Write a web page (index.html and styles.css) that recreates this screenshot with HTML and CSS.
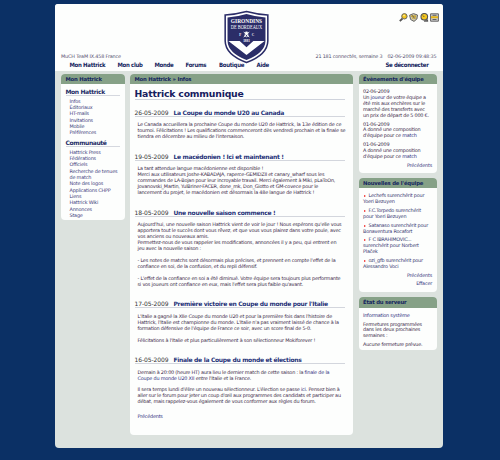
FILE: index.html
```
<!DOCTYPE html>
<html lang="fr">
<head>
<meta charset="utf-8">
<title>Hattrick</title>
<link rel="stylesheet" href="styles.css">
</head>
<body>
<div class="page">
  <header class="header">
    <div class="tools">
      <svg width="9" height="9" viewBox="0 0 9 9"><path d="M3.5 5.5L.8 8.2" stroke="#555" stroke-width="1.8"/><circle cx="5.4" cy="3.3" r="2.7" fill="#f3c51d" stroke="#666" stroke-width="1"/><circle cx="5" cy="2.6" r=".8" fill="#fff6b0"/></svg>
      <svg width="9" height="9" viewBox="0 0 9 9"><path d="M.6 2.2L4.5.6 8.5 2 7.9 6 5 8.4 1.6 6.5z" fill="#cfc9b0" stroke="#666" stroke-width="1"/><path d="M2 3.2h5M3 5h4" stroke="#c79d13" stroke-width="1.2"/><path d="M3.4 2.3l2 3" stroke="#555" stroke-width=".8"/></svg>
      <svg width="9" height="9" viewBox="0 0 9 9"><circle cx="4.3" cy="3.8" r="3.3" fill="#f3c51d" stroke="#555" stroke-width="1.1"/><path d="M4.3 4L2.8 2.4M4 8.2h4L6.6 5.8" fill="#777" stroke="#444" stroke-width=".8"/></svg>
      <svg width="9" height="9" viewBox="0 0 9 9"><path d="M.6.8h7.8v7.4H.6z" fill="#ccc" stroke="#666" stroke-width="1"/><path d="M1 4.3h7" stroke="#e4b51a" stroke-width="2"/><path d="M2.5 2.3h4M2.5 6.5h4" stroke="#555" stroke-width=".9"/></svg>
    </div>
    <div class="status">
      <span class="team">MuCH TeaM IX.458 France</span>
      <span class="online">21 181 connectés, semaine 3</span>
      <span class="clock">02-06-2009 09:48:35</span>
    </div>
    <nav class="nav">
      <a class="n1">Mon Hattrick</a><a class="n2">Mon club</a><a class="n3">Monde</a><a class="n4">Forums</a><a class="n5">Boutique</a><a class="n6">Aide</a><a class="logout">Se déconnecter</a>
    </nav>
    <svg class="crest" width="45" height="54" viewBox="0 0 46 54">
      <path d="M1.2 4.5Q12 4 23 1Q34 4 44.8 4.5V31Q44.5 45 23 53Q1.5 45 1.2 31Z" fill="#fff" stroke="#2b2d68" stroke-width="1.6"/>
      <path d="M3.6 7Q14 6.4 23 3.6Q32 6.4 42.4 7V31Q42 43 23 50.5Q4 43 3.6 31Z" fill="#2b2d68"/>
      <path d="M4.5 31H16L23 37.5L30 31H41.5L23 45.5Z" fill="#fff"/>
      <text x="23" y="13" text-anchor="middle" textLength="32" lengthAdjust="spacingAndGlyphs" class="crest-bold">GIRONDINS</text>
      <text x="23" y="19" text-anchor="middle" textLength="32" lengthAdjust="spacingAndGlyphs" class="crest-name">DE BORDEAUX</text>
      <text x="16.5" y="26.3" text-anchor="middle" class="crest-small">F</text>
      <text x="29.5" y="26.3" text-anchor="middle" class="crest-small">C</text>
      <path d="M20.2 22L25.8 27M25.8 22L20.2 27" stroke="#fff" stroke-width="1"/><circle cx="23" cy="22.8" r="1.5" fill="#fff"/><circle cx="23" cy="25.2" r="1.6" fill="none" stroke="#fff" stroke-width=".8"/>
      <text x="23" y="32.2" text-anchor="middle" class="crest-small">1881</text>
    </svg>
  </header>
  <div class="columns">
    <aside class="left panel">
      <h2 class="bar">Mon Hattrick</h2>
      <div class="menu">
        <h3>Mon Hattrick</h3>
        <ul><li>Infos</li><li>Éditoriaux</li><li>HT-mails</li><li>Invitations</li><li>Mobile</li><li>Préférences</li></ul>
        <h3>Communauté</h3>
        <ul><li>Hattrick Press</li><li>Fédérations</li><li>Officiels</li><li>Recherche de tenues<br>de match</li><li>Note des logos</li><li>Applications CHPP</li><li>Liens</li><li>Hattrick Wiki</li><li>Annonces</li><li>Stage</li></ul>
      </div>
    </aside>
    <main class="main panel">
      <h2 class="bar">Mon Hattrick » Infos</h2>
      <div class="content">
        <h1>Hattrick communique</h1>
        <article>
          <h3><time>26-05-2009</time>La Coupe du monde U20 au Canada</h3>
          <p>Le Canada accueillera la prochaine Coupe du monde U20 de Hattrick, la 13e édition de ce<br>tournoi. Félicitations ! Les qualifications commenceront dès vendredi prochain et la finale se<br>tiendra en décembre au milieu de l'intersaison.</p>
        </article>
        <article>
          <h3><time>19-05-2009</time>Le macédonien ! Ici et maintenant !</h3>
          <p>La tant attendue langue macédonienne est disponible !<br>Merci aux utilisateurs Joshe-KABADAJA, raperce-GEMIDZII et canary_wharf sous les<br>commandes de LA-Bojan pour leur incroyable travail. Merci également à Miki, pLaToOn,<br>Jovanovski_Martin, YulBriner-FACER, done_mk, Don_Giotto et GM-covece pour le<br>lancement du projet, le macédonien est désormais la 48e langue de Hattrick !</p>
        </article>
        <article>
          <h3><time>18-05-2009</time>Une nouvelle saison commence !</h3>
          <p>Aujourd'hui, une nouvelle saison Hattrick vient de voir le jour ! Nous espérons qu'elle vous<br>apportera tout le succès dont vous rêvez, et que vous vous plairez dans votre poule, avec<br>vos anciens ou nouveaux amis.<br>Permettez-nous de vous rappeler les modifications, annoncées il y a peu, qui entrent en<br>jeu avec la nouvelle saison :<br><br>- Les notes de matchs sont désormais plus précises, et prennent en compte l'effet de la<br>confiance en soi, de la confusion, et du repli défensif.<br><br>- L'effet de la confiance en soi a été diminué. Votre équipe sera toujours plus performante<br>si vos joueurs ont confiance en eux, mais l'effet sera plus faible qu'avant.</p>
        </article>
        <article>
          <h3><time>17-05-2009</time>Première victoire en Coupe du monde pour l'Italie</h3>
          <p>L'Italie a gagné la XIIe Coupe du monde U20 et pour la première fois dans l'histoire de<br>Hattrick, l'Italie est championne du monde. L'Italie n'a pas vraiment laissé de chance à la<br>formation défensive de l'équipe de France ce soir, avec un score final de 5-0.<br><br>Félicitations à l'Italie et plus particulièrement à son sélectionneur Mokiforever !</p>
        </article>
        <article>
          <h3><time>16-05-2009</time>Finale de la Coupe du monde et élections</h3>
          <p>Demain à 20:00 (heure HT) aura lieu le dernier match de cette saison : la <a>finale de la<br>Coupe du monde U20 XII</a> entre l'Italie et la France.<br><br>Il sera temps lundi d'élire un nouveau sélectionneur. L'élection se passe <a>ici</a>. Pensez bien à<br>aller sur le forum pour jeter un coup d'œil aux programmes des candidats et participer au<br>débat, mais rappelez-vous également de vous conformer aux règles du forum.</p>
        </article>
        <a class="prev">Précédents</a>
      </div>
    </main>
    <aside class="right">
      <section class="panel events">
        <h2 class="bar">Évènements d'équipe</h2>
        <div class="box">
          <p>02-06-2009<br>Un <a>joueur</a> de votre équipe a<br>été mis aux enchères sur le<br>marché des transferts avec<br>un prix de départ de 5 000 €.</p>
          <p>01-06-2009<br>A donné une composition<br>d'équipe pour ce <a>match</a></p>
          <p>01-06-2009<br>A donné une composition<br>d'équipe pour ce <a>match</a></p>
          <p class="more">Précédents</p>
        </div>
      </section>
      <section class="panel news">
        <h2 class="bar">Nouvelles de l'équipe</h2>
        <div class="box">
          <p class="item">Lechefs surenchérit pour<br>Yoeri Bezuyen</p>
          <p class="item">F.C.Torpedo surenchérit<br>pour Yoeri Bezuyen</p>
          <p class="item">Satanaso surenchérit pour<br>Bonaventura Rocafort</p>
          <p class="item">F C IBRAHIMOVIC...<br>surenchérit pour Norbert<br>Plaček</p>
          <p class="item">ozi_gfb surenchérit pour<br>Alessandro Voci</p>
          <p class="more">Précédents</p>
          <p class="more">Effacer</p>
        </div>
      </section>
      <section class="panel server">
        <h2 class="bar">État du serveur</h2>
        <div class="box">
          <p><a>Information système</a></p>
          <p>Fermetures programmées<br>dans les deux prochaines<br>semaines :</p>
          <p>Aucune fermeture prévue.</p>
        </div>
      </section>
    </aside>
  </div>
</div>
</body>
</html>
```
FILE: styles.css
```
* { box-sizing: border-box; margin: 0; padding: 0; }
body {
  width: 500px; height: 460px; overflow: hidden; padding: 4px 0 0 55px;
  background: #0b3065;
  font: 4.9px/5.93px "DejaVu Sans", sans-serif; color: #3c2a48; white-space: nowrap;
  letter-spacing: -.195px;
}
a { color: #303080; }
.page { width: 387.5px; height: 444px; background: #dce2de; border-radius: 3px 3px 4px 4px; overflow: hidden; }
.header { position: relative; height: 67px; background: #fdfefd; }
.tools { position: absolute; left: 344px; top: 9px; display: flex; gap: 1.3px; }
.status { display: flex; padding: 49px 6px 0 6px; height: 56px; line-height: 6px; letter-spacing: -.15px; color: #555070; }
.online { margin-left: auto; letter-spacing: -.2px; }
.clock { margin-left: 5px; }
.nav { display: flex; padding-left: 14.5px; padding-right: 14px; font: bold 6px/10px "DejaVu Sans Condensed", "DejaVu Sans", sans-serif; letter-spacing: -.3px; }
.nav a { color: #14245e; }
.n1 { width: 48px; } .n2 { width: 37px; } .n3 { width: 31px; } .n4 { width: 33.5px; } .n5 { width: 37.5px; }
.logout { margin-left: auto; }
.crest { position: absolute; left: 169px; top: 5.5px; letter-spacing: 0; }
.crest text { fill: #fff; font-family: "Liberation Serif", serif; }
.crest .crest-bold { font-size: 6px; font-weight: bold; }
.crest .crest-name { font-size: 5.2px; }
.crest .crest-small { font-size: 3.4px; font-weight: bold; }
.columns { display: flex; align-items: flex-start; gap: 5.5px; padding: 2.5px 6px 0; }
.panel { background: #fdfefd; border-radius: 4px; overflow: hidden; }
.bar { height: 10.5px; padding-left: 4.5px; background: #86a187; color: #14245e; font-size: 5.3px; line-height: 10.5px; letter-spacing: -.19px; }
.left { width: 63.5px; height: 146.5px; }
.menu { padding: 4.5px 4.5px 0; }
.menu h3 { height: 7px; margin-bottom: 2.2px; border-bottom: 1px solid #d5d8df; color: #1c2c66; font-size: 6px; line-height: 6px; letter-spacing: -.38px; }
.menu ul { list-style: none; padding-left: 4px; margin-bottom: 4.2px; color: #40407c; line-height: 6.3px; letter-spacing: -.2px; }
.main { width: 223px; height: 361.5px; }
.content { padding: 4.5px 8px 0 4.5px; }
h1 { height: 11px; border-bottom: 1px solid #cfd3dc; color: #16205f; font-size: 9.3px; line-height: 10px; letter-spacing: -.2px; }
article { padding-top: 9.6px; }
article + article { padding-top: 12.9px; }
article h3 { height: 8px; border-bottom: 1px solid #d3d6dd; color: #1f3278; font-size: 6px; line-height: 8px; letter-spacing: -.3px; }
time { display: inline-block; width: 39px; font-weight: normal; letter-spacing: -.1px; color: #333; }
article p { padding: 5.3px 0 0 3px; }
.prev { display: block; padding: 9px 0 0 3px; }
.right { width: 78px; }
.box { padding: 5.3px 4.5px 0; line-height: 5.85px; letter-spacing: -.21px; }
.box p { margin-bottom: 3px; }
.box .more { text-align: right; color: #363680; }
.item { color: #363670; }
.item::before { content: ""; display: inline-block; width: 0; height: 0; margin: 0 3px 0 .5px; border: solid transparent; border-width: 1.8px 0 1.8px 2.2px; border-left-color: #f01818; }
.events { height: 99.5px; margin-bottom: 4.5px; }
.news { height: 114.5px; margin-bottom: 5px; }
.server { height: 52.5px; }
```
